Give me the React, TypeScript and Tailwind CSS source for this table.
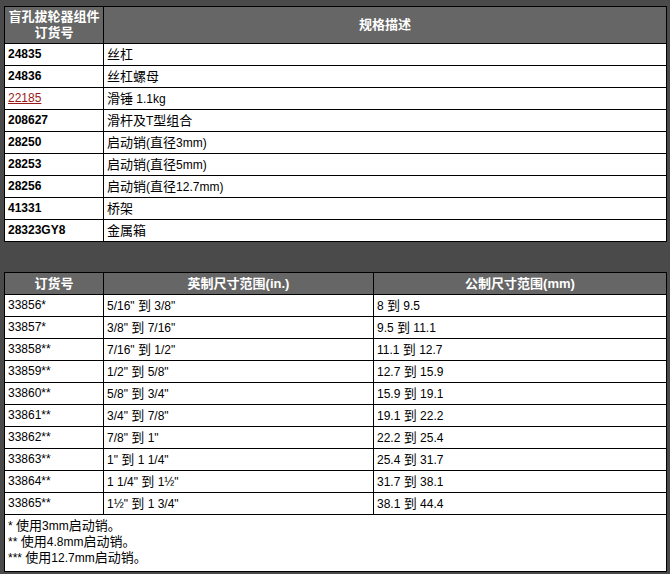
import React from "react";

const parts: { id: string; desc: string; link?: boolean }[] = [
  { id: "24835", desc: "丝杠" },
  { id: "24836", desc: "丝杠螺母" },
  { id: "22185", desc: "滑锤 1.1kg", link: true },
  { id: "208627", desc: "滑杆及T型组合" },
  { id: "28250", desc: "启动销(直径3mm)" },
  { id: "28253", desc: "启动销(直径5mm)" },
  { id: "28256", desc: "启动销(直径12.7mm)" },
  { id: "41331", desc: "桥架" },
  { id: "28323GY8", desc: "金属箱" },
];

const sizes: [string, string, string][] = [
  ["33856*", "5/16\" 到 3/8\"", "8 到 9.5"],
  ["33857*", "3/8\" 到 7/16\"", "9.5 到 11.1"],
  ["33858**", "7/16\" 到 1/2\"", "11.1 到 12.7"],
  ["33859**", "1/2\" 到 5/8\"", "12.7 到 15.9"],
  ["33860**", "5/8\" 到 3/4\"", "15.9 到 19.1"],
  ["33861**", "3/4\" 到 7/8\"", "19.1 到 22.2"],
  ["33862**", "7/8\" 到 1\"", "22.2 到 25.4"],
  ["33863**", "1\" 到 1 1/4\"", "25.4 到 31.7"],
  ["33864**", "1 1/4\" 到 1½\"", "31.7 到 38.1"],
  ["33865**", "1½\" 到 1 3/4\"", "38.1 到 44.4"],
];

const font = {
  fontFamily: '"Liberation Sans", Arial, "Noto Sans CJK SC", sans-serif',
};

function T({ s }: { s: string }) {
  const runs = s.split(/([\u3000-\u9fff]+)/).filter((x) => x.length > 0);
  return (
    <>
      {runs.map((r, i) =>
        /[\u3000-\u9fff]/.test(r) ? (
          <span key={i} className="text-[13px] leading-[15px]">
            {r}
          </span>
        ) : (
          <React.Fragment key={i}>{r}</React.Fragment>
        )
      )}
    </>
  );
}

export default function App() {
  return (
    <div
      className="min-h-[574px] w-[670px] bg-[#4a4a4a] pt-[6px] pl-[4px] text-[12px] leading-[15px] text-black"
      style={font}
    >
      <table className="w-[663px] border-collapse border border-black bg-white">
        <thead>
          <tr className="bg-[#666666] text-[13px] font-bold leading-[16px] text-white">
            <th className="h-[37px] w-[99px] border border-black p-0 text-center">
              盲孔拔轮器组件
              <br />
              订货号
            </th>
            <th className="h-[37px] border border-black p-0 text-center">规格描述</th>
          </tr>
        </thead>
        <tbody>
          {parts.map((p) => (
            <tr key={p.id}>
              <td className="h-[22px] border border-black px-[3px] py-0 font-bold">
                {p.link ? (
                  <span className="font-normal text-[#9a1a1a] underline">{p.id}</span>
                ) : (
                  p.id
                )}
              </td>
              <td className="h-[22px] border border-black px-[3px] py-0">
                <T s={p.desc} />
              </td>
            </tr>
          ))}
        </tbody>
      </table>

      <table className="mt-[30px] w-[663px] border-collapse border border-black bg-white">
        <thead>
          <tr className="bg-[#666666] text-[13px] font-bold text-white">
            <th className="h-[22px] w-[99px] border border-black p-0 text-center">订货号</th>
            <th className="h-[22px] w-[270px] border border-black p-0 text-center">
              英制尺寸范围(in.)
            </th>
            <th className="h-[22px] border border-black p-0 text-center">公制尺寸范围(mm)</th>
          </tr>
        </thead>
        <tbody>
          {sizes.map((r) => (
            <tr key={r[0]}>
              <td className="h-[22px] border border-black px-[3px] py-0">{r[0]}</td>
              <td className="h-[22px] border border-black px-[3px] py-0">
                <T s={r[1]} />
              </td>
              <td className="h-[22px] border border-black px-[3px] py-0">
                <T s={r[2]} />
              </td>
            </tr>
          ))}
          <tr>
            <td colSpan={3} className="border border-black px-[3px] pt-[3px] pb-[5px] leading-[15px]">
              <T s="* 使用3mm启动销。" />
              <br />
              <T s="** 使用4.8mm启动销。" />
              <br />
              <T s="*** 使用12.7mm启动销。" />
            </td>
          </tr>
        </tbody>
      </table>
    </div>
  );
}
